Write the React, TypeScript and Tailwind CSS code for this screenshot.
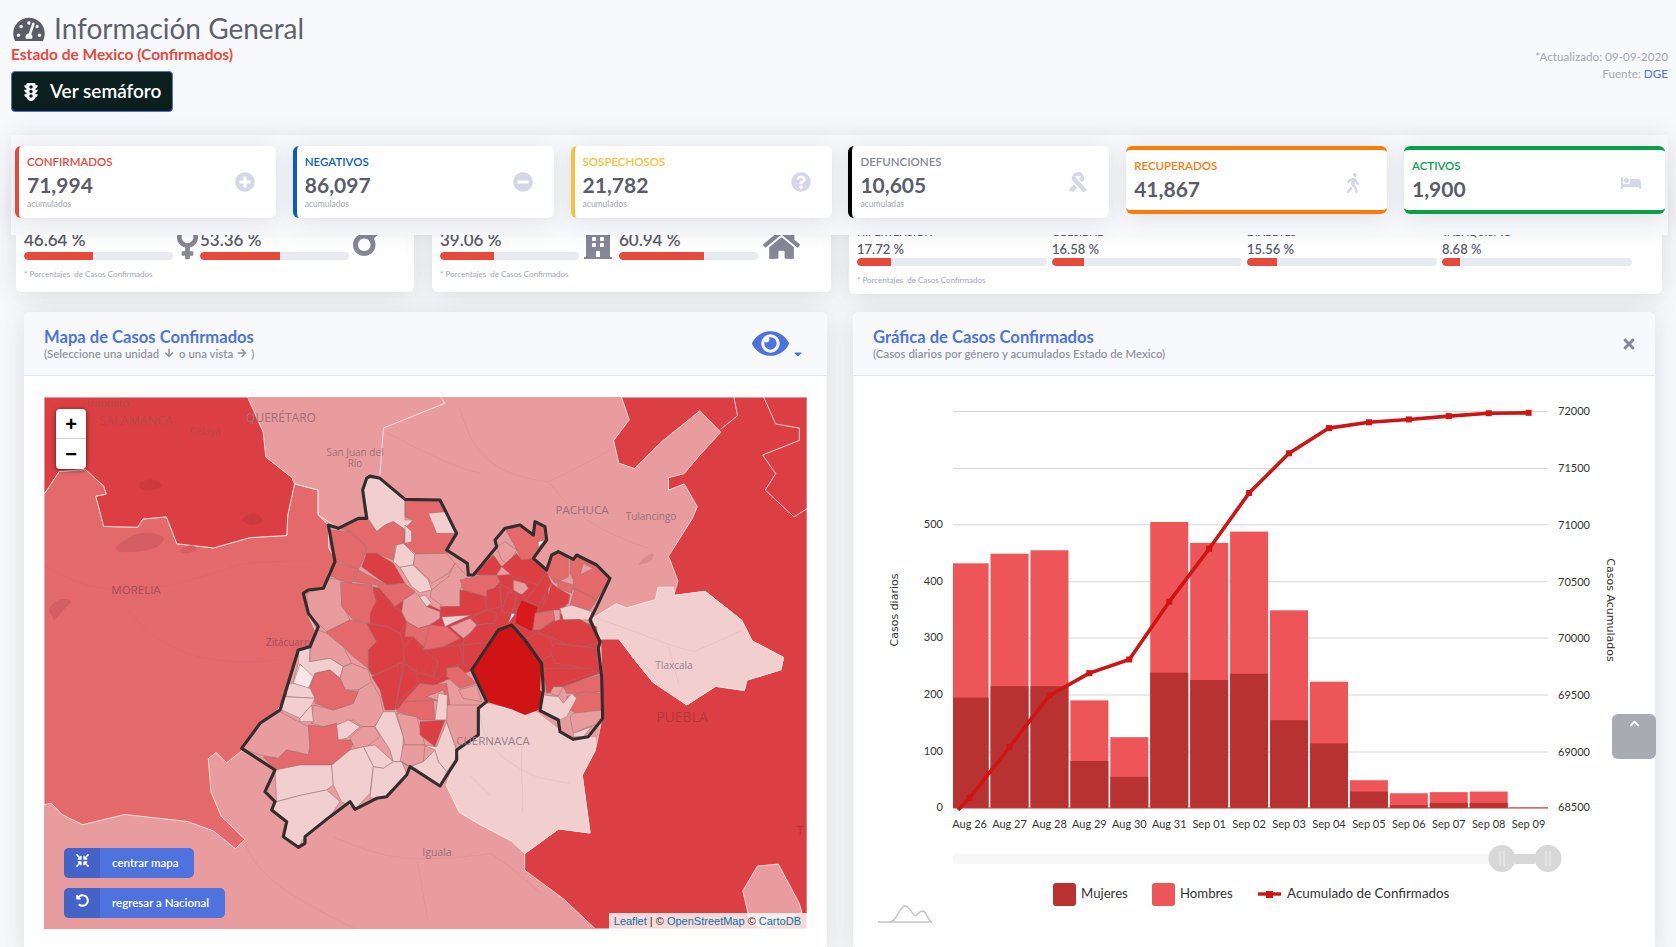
import React from "react";
import {
  FaTachometerAlt, FaTrafficLight, FaPlusCircle, FaMinusCircle, FaQuestionCircle, FaRibbon, FaWalking, FaBed,
  FaVenus, FaMars, FaBuilding, FaHome, FaEye, FaTimes, FaCompressArrowsAlt, FaUndoAlt, FaChevronUp, FaArrowDown, FaArrowRight, FaCaretDown,
} from "react-icons/fa";

const C: Record<string, string> = { a: "#f2cfcf", p: "#f9e6e6", b: "#e99c9d", c: "#e4696b", d: "#dc3f43", e: "#d81a1c", w: "#ffffff" };

const MUNI: [string, string][] = [
  ["d", "420,490 430,380 525,400 630,450 690,400 760,350 880,340 950,340 960,450 1100,500 1110,640 950,700 930,600 850,495 730,630 650,660 560,700 500,750 430,650"],
  ["a", "410,55 450,55 525,118 525,180 550,180 525,210 490,185 465,195 440,215 415,175 398,90"],
  ["c", "525,118 630,120 680,220 650,280 560,282 520,250 525,205 550,180 525,170"],
  ["a", "595,160 645,155 675,220 620,220"],
  ["a", "525,195 545,215 545,245 525,250"],
  ["c", "300,195 325,205 385,175 410,175 440,215 465,195 490,185 520,205 520,250 495,255 490,300 440,280 405,285 410,260 360,215"],
  ["c", "300,210 360,215 410,260 400,300 385,328 330,305 315,305"],
  ["d", "410,280 440,280 490,310 525,370 470,375 395,320"],
  ["a", "500,255 520,250 555,285 550,315 510,322 490,305"],
  ["a", "510,322 550,315 595,360 605,390 570,398 545,380"],
  ["b", "555,282 650,280 675,310 655,340 605,370 595,355 550,315"],
  ["b", "675,310 712,350 690,390 690,440 640,440 600,410 605,390 655,350"],
  ["c", "320,305 385,328 365,370 330,360 295,345"],
  ["c", "385,330 470,375 525,370 555,395 495,440 440,375 370,365"],
  ["b", "300,355 330,360 335,430 360,480 290,515 265,490 235,460 230,400 280,385"],
  ["c", "335,365 365,370 425,375 440,430 420,490 370,480 335,440"],
  ["d", "430,380 490,440 515,455 530,490 510,520 470,500 420,490 420,460 440,420"],
  ["b", "555,398 570,410 590,440 630,455 630,475 600,495 565,505 530,485 515,455 520,420"],
  ["a", "568,410 585,405 605,430 590,440"],
  ["c", "290,515 360,480 410,490 440,545 415,570 415,625 370,590 340,560 290,530"],
  ["d", "410,490 470,500 510,520 525,565 520,605 460,635 425,645 415,625 415,570 440,545"],
  ["b", "265,510 290,520 340,560 365,610 340,620 300,595 240,605 240,570"],
  ["a", "205,570 240,560 238,605 300,595 340,620 330,655 300,630 255,640 240,680 190,665 205,610"],
  ["p", "210,612 250,650 235,685 190,670"],
  ["b", "340,620 365,610 415,630 425,670 385,690 345,690 330,655"],
  ["b", "250,735 310,750 370,730 385,690 425,665 450,710 460,755 435,800 395,800 370,780 320,795 280,800 245,790"],
  ["c", "255,640 300,630 330,655 345,690 385,695 370,730 310,750 255,730 240,680"],
  ["a", "170,670 190,670 240,685 255,715 170,710"],
  ["a", "165,710 255,715 245,735 210,775 155,750"],
  ["a", "245,735 250,785 210,785 210,775"],
  ["b", "90,790 150,755 205,785 235,800 240,860 235,885 170,870 145,895 90,885 35,865"],
  ["c", "235,795 280,800 320,790 330,840 375,840 360,870 305,915 210,915 180,930 135,930 100,890 145,895 170,870 235,885 240,860"],
  ["a", "320,795 355,780 390,800 350,835 325,840"],
  ["b", "395,800 435,800 450,830 410,860 375,865 360,835"],
  ["a", "460,755 495,755 520,830 515,905 490,905 480,870 435,800"],
  ["b", "500,760 560,770 585,855 525,855 520,830"],
  ["d", "570,785 645,780 615,860 570,825"],
  ["a", "580,855 620,860 650,785 680,870 675,900 650,935 625,905 615,870"],
  ["b", "520,855 585,855 580,905 540,920 510,905"],
  ["a", "400,860 435,855 490,905 460,925 430,920"],
  ["a", "135,930 210,915 305,915 310,975 290,990 215,1005 140,1025"],
  ["a", "140,1025 215,1005 290,990 330,1025 300,1070 225,1130 205,1162 160,1130 170,1085 125,1050"],
  ["a", "305,915 360,870 400,860 430,920 420,1000 375,1048 335,1025 310,975"],
  ["a", "430,920 460,925 490,905 515,905 530,940 470,1010 420,1015"],
  ["a", "515,905 540,920 580,905 615,870 625,905 650,935 630,978 540,920"],
  ["b", "650,735 750,735 745,825 680,870 650,785"],
  ["c", "500,755 520,725 610,720 615,780 570,780 560,770"],
  ["d", "495,745 525,610 560,640 565,670 530,700"],
  ["d", "425,650 460,635 520,605 495,750 465,750 450,690"],
  ["d", "520,565 550,530 580,570 625,605 610,650 570,640 525,610"],
  ["d", "580,570 690,555 700,610 650,625 625,660 610,650 625,605"],
  ["d", "700,555 790,545 725,625 700,610"],
  ["c", "650,625 685,620 740,670 690,685 650,650"],
  ["c", "570,670 610,675 650,670 660,735 610,720 520,725"],
  ["b", "685,690 740,675 755,725 700,715"],
  ["b", "590,710 640,690 650,730 620,720"],
  ["a", "615,780 625,700 652,705 650,780"],
  ["c", "530,485 565,505 600,495 620,510 580,560 550,530 525,530"],
  ["c", "600,495 650,500 690,535 640,560 580,570"],
  ["b", "660,500 720,475 745,500 700,535"],
  ["a", "635,470 730,462 665,490 645,500"],
  ["d", "630,440 690,440 690,390 760,395 770,450 730,465 635,470"],
  ["c", "690,360 760,345 800,345 810,365 770,410 700,390"],
  ["d", "730,345 790,285 815,320 800,345 760,345"],
  ["b", "800,260 825,245 860,270 835,315 815,300"],
  ["c", "825,205 870,195 910,225 915,185 945,200 950,240 910,295 875,300 855,260"],
  ["d", "860,280 875,300 910,295 950,335 925,375 850,350 815,320"],
  ["d", "950,335 965,370 925,440 885,420 925,375"],
  ["d", "770,390 810,380 815,440 770,450"],
  ["d", "810,370 845,390 835,420 815,440"],
  ["b", "850,360 885,370 895,385 875,405 850,390"],
  ["d", "835,395 860,405 845,460 815,455"],
  ["d", "860,400 885,405 875,425 855,460"],
  ["e", "875,420 925,440 905,515 855,490 860,450"],
  ["w", "845,460 855,462 835,490"],
  ["w", "925,245 945,240 925,262"],
  ["d", "730,470 770,450 800,460 795,490 740,495"],
  ["d", "695,555 700,545 740,495 790,490 805,510 785,545"],
  ["c", "950,335 965,285 985,275 1015,298 1015,350 975,370"],
  ["c", "1020,300 1040,290 1100,315 1140,355 1100,420 1030,390 1030,360 1020,340"],
  ["b", "1060,310 1090,325 1050,345"],
  ["c", "980,360 1030,375 1025,400 985,385"],
  ["d", "965,370 985,385 1020,405 1015,430 980,460 925,455 955,405"],
  ["c", "1035,385 1100,420 1080,450 1020,435"],
  ["a", "990,445 1025,435 1085,455 1080,480 1000,480"],
  ["c", "915,460 970,450 975,478 930,510 910,510"],
  ["b", "970,450 990,450 990,480 975,485"],
  ["d", "920,515 985,480 1050,478 1090,505 1110,545 1050,565 1000,550 960,530"],
  ["d", "885,540 920,520 960,535 975,580 935,600"],
  ["d", "975,550 1100,565 1108,640 1040,620 975,610 960,570"],
  ["d", "945,625 1090,625 1085,640 1000,670 960,700 935,650"],
  ["c", "1000,680 1110,645 1115,695 1050,700 1010,700"],
  ["b", "970,680 1000,680 985,708 960,700"],
  ["c", "1010,710 1060,695 1115,700 1115,750 1040,760 1020,750"],
  ["a", "940,705 985,710 1000,730 1025,700 1040,715 1010,770 990,780 930,750"],
  ["b", "1030,760 1115,750 1115,790 1075,800 1030,820 1020,770"],
  ["a", "1030,820 1085,800 1060,830 1030,830"],
];

const OUTLINE =
  "410,55 420,48 450,55 525,118 630,120 680,220 650,270 712,310 715,345 730,345 800,260 795,240 825,205 870,195 910,225 915,185 945,200 950,240 910,295 950,330 965,285 985,275 1030,298 1040,285 1100,315 1140,355 1100,440 1080,480 1110,545 1105,565 1115,650 1118,775 1075,830 1030,838 990,815 985,780 930,752 940,690 935,610 885,540 845,495 805,510 725,630 770,725 745,745 745,825 680,870 680,900 630,978 540,920 530,945 470,1010 440,1015 375,1048 360,1025 300,1070 225,1130 225,1150 205,1162 160,1130 170,1085 125,1050 135,1025 105,995 135,930 35,865 90,790 150,750 205,570 240,560 265,500 235,460 220,400 235,390 280,385 315,305 295,195 325,205 385,175 410,175 398,90";

const CDMX = "845,495 885,540 935,610 930,690 940,700 925,750 885,765 845,748 770,725 725,630 805,510";

function MapDrawing() {
  const labels: [string, number, number, number, string][] = [
    ["Irapuato", 108, 404, 10.5, "#b04a50"],
    ["SALAMANCA", 136, 422, 12.5, "#b5484c"],
    ["Celaya", 205, 432, 10, "#b5484c"],
    ["QUERÉTARO", 281, 419, 12, "#a0707a"],
    ["San Juan del", 355, 453, 10, "#a0707a"],
    ["Río", 355, 464, 10, "#a0707a"],
    ["PACHUCA", 582, 511, 11.5, "#95707f"],
    ["Tulancingo", 651, 517, 10, "#95707f"],
    ["MORELIA", 136, 591, 11.5, "#a0505a"],
    ["Zitácuaro", 288, 643, 10, "#a0505a"],
    ["Tlaxcala", 674, 666, 10, "#958090"],
    ["PUEBLA", 682, 718, 14, "#b5363b"],
    ["CUERNAVACA", 493, 742, 11.5, "#95808f"],
    ["Iguala", 437, 853, 10.5, "#95707f"],
    ["TOLUCA", 417, 671, 11, "#d2474b"],
    ["T", 800, 832, 12, "#b5363b"],
  ];
  return (
    <svg viewBox="44 397 763 532" className="block w-full h-[532px]">
      <rect x="44" y="397" width="763" height="532" fill={C.b} />
      <g transform="translate(20 300) scale(0.523 0.4132)" stroke="#f9e4e4" strokeWidth="0.9" strokeLinejoin="round">
        <polygon vectorEffect="non-scaling-stroke" fill={C.c} points="46,470 75,415 125,410 160,450 165,470 145,475 160,548 225,550 235,530 280,525 300,590 370,600 440,575 510,570 512,520 525,445 570,460 570,520 590,545 590,600 605,630 590,660 585,695 545,710 550,760 565,800 555,850 530,880 510,950 490,1000 430,1085 395,1120 375,1095 360,1110 365,1190 385,1250 430,1305 412,1328 370,1285 320,1262 200,1245 120,1270 80,1245 60,1218 46,1222" />
        <polygon vectorEffect="non-scaling-stroke" fill={C.d} points="46,235 435,235 465,320 470,380 520,430 525,445 512,520 510,570 440,575 370,600 300,590 280,525 235,530 225,550 160,548 145,475 165,470 160,450 125,410 75,415 46,470" />
        <polygon vectorEffect="non-scaling-stroke" fill={C.d} points="1150,235 1165,290 1135,340 1145,395 1175,408 1225,345 1300,268 1340,320 1300,375 1270,420 1240,430 1240,460 1270,445 1295,500 1285,530 1240,620 1258,680 1250,715 1310,705 1380,775 1400,825 1460,865 1455,895 1390,920 1385,945 1330,935 1275,980 1210,925 1175,870 1145,820 1110,820 1115,1000 1105,1060 1100,1090 1075,1150 1090,1290 1030,1280 965,1340 965,1380 1040,1450 1100,1522 1505,1522 1505,235" />
        <polygon vectorEffect="non-scaling-stroke" fill={C.a} points="1095,770 1140,735 1160,745 1215,725 1220,695 1250,695 1250,715 1310,705 1380,775 1400,825 1460,865 1455,895 1390,920 1385,945 1330,935 1275,980 1210,925 1175,870 1145,820 1110,820" />
        <polygon vectorEffect="non-scaling-stroke" fill={C.a} points="815,1175 840,1090 880,975 940,990 990,1000 1030,1040 1040,1055 1100,1060 1100,1090 1075,1150 1090,1290 1030,1280 965,1340 940,1310 880,1270 840,1240" />
        <polygon vectorEffect="non-scaling-stroke" fill={C.b} points="1382,1430 1410,1370 1450,1365 1490,1460 1495,1482 1420,1522 1395,1500" />
        <polyline vectorEffect="non-scaling-stroke" fill="none" points="1422,235 1445,300 1490,310 1490,340 1420,375 1445,420 1425,460 1480,525 1505,505" />
        <polyline vectorEffect="non-scaling-stroke" fill="none" points="1365,235 1372,280 1340,312" />
        <polyline vectorEffect="non-scaling-stroke" fill="none" points="805,235 812,250 695,310 688,425" />
        <polyline vectorEffect="non-scaling-stroke" fill="none" points="525,445 570,460 570,520 600,545" />
        <g stroke="none">
          <path d="M228,445 C240,430 262,430 272,450 C262,462 240,465 228,455Z" fill="#cd3a3e" />
          <path d="M425,530 C440,510 460,515 465,535 C450,548 432,550 425,530Z" fill="#cd3a3e" />
          <path d="M182,600 C200,575 240,545 275,575 C272,600 250,612 190,610Z" fill="#d35f62" />
          <path d="M305,605 C320,590 338,590 338,605 C325,615 310,617 305,605Z" fill="#d35f62" />
          <path d="M55,750 C65,725 85,715 98,730 C85,745 75,765 65,775Z" fill="#d35f62" />
          <path d="M1182,640 C1190,625 1205,610 1212,615 C1212,630 1200,640 1182,640Z" fill="#d98d8f" />
        </g>
        <g fill="none" stroke="#9a5a66" strokeOpacity="0.13">
          <path vectorEffect="non-scaling-stroke" d="M1100,770 C1180,800 1240,840 1290,850 C1330,830 1360,810 1380,800 M1190,880 C1210,910 1230,940 1250,960 M1240,840 L1260,930" />
          <path vectorEffect="non-scaling-stroke" d="M880,1000 C885,1060 900,1100 980,1150 C1000,1160 1030,1165 1050,1170 M960,1080 C955,1150 965,1200 960,1240 M860,1150 L900,1200" />
          <path vectorEffect="non-scaling-stroke" d="M840,260 C860,340 880,420 1010,440 C1040,480 1060,540 1200,600 M1010,440 C1080,400 1130,360 1180,330 M700,320 C760,360 820,400 880,420" />
          <path vectorEffect="non-scaling-stroke" d="M600,1300 C680,1340 720,1370 900,1340 C950,1380 970,1410 1000,1440 M760,1360 L780,1500 M430,1310 C450,1380 480,1420 640,1522" />
          <path vectorEffect="non-scaling-stroke" d="M46,640 C120,700 200,740 420,640 C460,630 510,635 560,630 M200,740 C240,800 300,900 500,870" />
        </g>
      </g>
      <g transform="translate(230 460) scale(0.33333)" strokeLinejoin="round">
        <polygon vectorEffect="non-scaling-stroke" points={OUTLINE} fill={C.b} stroke="none" />
        {MUNI.map(([k, p], i) => (
          <polygon key={i} vectorEffect="non-scaling-stroke" points={p} fill={C[k]} stroke="#9a6f70" strokeWidth="0.55" />
        ))}
        <polygon vectorEffect="non-scaling-stroke" points={CDMX} fill="#d01315" />
        <polygon vectorEffect="non-scaling-stroke" points={OUTLINE} fill="none" stroke="#332e2e" strokeWidth="3.1" />
      </g>
      {labels.map(([t, x, y, s, c]) => (
        <text key={t} x={x} y={y} fontSize={s} fill={c} textAnchor="middle" dominantBaseline="middle" fontFamily="'Open Sans',sans-serif" fontWeight="500">
          {t}
        </text>
      ))}
    </svg>
  );
}

const TOTAL = [432, 449, 455, 190, 125, 505, 468, 488, 349, 223, 49, 26, 28, 29, 1];
const MUJ = [195, 215, 215, 83, 55, 239, 226, 237, 155, 114, 29, 5, 9, 9, 0];
const DAYS = ["Aug 26", "Aug 27", "Aug 28", "Aug 29", "Aug 30", "Aug 31", "Sep 01", "Sep 02", "Sep 03", "Sep 04", "Sep 05", "Sep 06", "Sep 07", "Sep 08", "Sep 09"];
const LINE = [1205, 1082, 957, 903, 870, 730, 602, 467, 371, 310, 296, 289, 281, 274, 273];

function Chart() {
  const cx = (i: number) => 969.6 + 39.93 * i;
  const vy = (v: number) => 808 - v * 0.5664;
  const ly = (z: number) => 300 + z / 2.42;
  const grid = [411.5, 468.6, 524.8, 581.8, 638, 695, 752];
  const right = ["72000", "71500", "71000", "70500", "70000", "69500", "69000"];
  const left: [string, number][] = [["500", 524.8], ["400", 581.8], ["300", 638], ["200", 695], ["100", 752], ["0", 808]];
  const pts = LINE.map((z, i) => `${cx(i)},${ly(z)}`).join(" ");
  return (
    <svg viewBox="853 376 802 571" className="block w-full h-[571px]" fontFamily="'Lato',sans-serif">
      {grid.map((y) => (
        <line key={y} x1="953" x2="1548" y1={y} y2={y} stroke="#d6d6d6" />
      ))}
      {grid.map((y, i) => (
        <text key={y} x="1558" y={y + 1} fontSize="11" fill="#333" dominantBaseline="middle">{right[i]}</text>
      ))}
      <text x="1558" y="808.5" fontSize="11" fill="#333" dominantBaseline="middle">68500</text>
      {left.map(([t, y]) => (
        <text key={t} x="943" y={y + 0.5} fontSize="11" fill="#333" textAnchor="end" dominantBaseline="middle">{t}</text>
      ))}
      {TOTAL.map((v, i) => {
        const l = Math.max(953, cx(i) - 19);
        const r = cx(i) + 19;
        return (
          <g key={i}>
            <rect x={l} y={vy(v)} width={r - l} height={808 - vy(v)} fill="#ee5558" />
            <rect x={l} y={vy(MUJ[i])} width={r - l} height={808 - vy(MUJ[i])} fill="#b93232" />
          </g>
        );
      })}
      <line x1="953" x2="1548" y1="808" y2="808" stroke="#cc3333" />
      <polyline points={`958,810 ${pts}`} fill="none" stroke="#cf1414" strokeWidth="3.6" strokeLinejoin="round" />
      {LINE.map((z, i) => (
        <rect key={i} x={cx(i) - 3} y={ly(z) - 3} width="6" height="6" fill="#cf1414" />
      ))}
      {DAYS.map((d, i) => (
        <text key={d} x={cx(i)} y="825" fontSize="11" fill="#333" textAnchor="middle" dominantBaseline="middle">{d}</text>
      ))}
      <text transform="translate(895 610) rotate(-90)" fontSize="11" fill="#333" textAnchor="middle" dominantBaseline="middle" fontFamily="'DejaVu Sans',sans-serif">Casos diarios</text>
      <text transform="translate(1610 610) rotate(90)" fontSize="11" fill="#333" textAnchor="middle" dominantBaseline="middle" fontFamily="'DejaVu Sans',sans-serif">Casos Acumulados</text>

      <rect x="953" y="854" width="595" height="10" rx="3" fill="#f7f7f7" />
      <rect x="1515" y="854" width="20" height="10" fill="#d8d8d8" />
      <circle cx="1502" cy="858.5" r="13.5" fill="#d8d8d8" />
      <circle cx="1548" cy="858.5" r="13.5" fill="#d8d8d8" />
      <path d="M1500,851 V866 M1504,851 V866 M1546,851 V866 M1550,851 V866" stroke="#eeeeee" strokeWidth="1" />

      <rect x="1053" y="883" width="23" height="23" rx="3" fill="#b93232" />
      <text x="1081" y="894.5" fontSize="13.2" fill="#333" dominantBaseline="middle">Mujeres</text>
      <rect x="1152" y="883" width="23" height="23" rx="3" fill="#ee5558" />
      <text x="1180" y="894.5" fontSize="13.2" fill="#333" dominantBaseline="middle">Hombres</text>
      <line x1="1258" x2="1281" y1="894" y2="894" stroke="#cf1414" strokeWidth="3.4" />
      <rect x="1266" y="891" width="7" height="7" fill="#cf1414" />
      <text x="1287" y="894.5" fontSize="13.4" fill="#333" dominantBaseline="middle">Acumulado de Confirmados</text>

      <path d="M878,922 H890 C897,922 899,906 905,906 C911,906 913,920 918,914 C921,910 924,910 926,914 C928,918 930,922 932,922" fill="none" stroke="#c4c4c4" strokeWidth="1.5" />
      <path d="M890,922 H932" stroke="#c4c4c4" strokeWidth="1.5" />
    </svg>
  );
}

function Stat({ label, value, sub, color, text, Icon, both }: { label: string; value: string; sub?: string; color: string; text: string; Icon: React.ComponentType<{ className?: string }>; both?: boolean }) {
  return (
    <div
      className={`w-[261px] shrink-0 bg-white rounded-[6px] shadow-[0_3px_24px_rgba(58,59,69,0.13)] flex items-center justify-between pr-[21px] pl-[8px] ${color} ${both ? "border-y-4 h-[68px]" : "border-l-4 h-[72px]"}`}
    >
      <div className="flex flex-col">
        <span className={`text-[11.5px] leading-[14px] font-semibold ${text}`}>{label}</span>
        <span className="text-[21px] leading-[27px] font-bold text-[#5a5c69] mt-[2px]">{value}</span>
        {sub && <span className="text-[8.5px] leading-[10px] text-[#a3a5b1] mt-[1px]">{sub}</span>}
      </div>
      <Icon className={`text-[20px] text-[#d5d7e6] ${both ? "mt-[5px] mr-[3px]" : ""}`} />
    </div>
  );
}

function Bar({ pct, w }: { pct: number; w: string }) {
  return (
    <div className={`h-2 rounded-full bg-[#e8eaf1] overflow-hidden ${w}`}>
      <div className="h-full bg-[#e74a3b] rounded-l-full" style={{ width: `${pct}%` }} />
    </div>
  );
}

function Pct({ v, w }: { v: number; w: string }) {
  return (
    <div className={`flex flex-col shrink-0 ${w}`}>
      <span className="text-[17px] leading-[20px] font-semibold text-[#5a5c69]">{v.toFixed(2)} %</span>
      <Bar pct={v} w="w-full mt-[2px]" />
    </div>
  );
}

function Note() {
  return <p className="text-[8px] leading-[10px] text-[#a3a5b8] mt-[9px]">* Porcentajes&nbsp; de Casos Confirmados</p>;
}

function Cond({ name, pct, fill }: { name: string; pct: string; fill: number }) {
  return (
    <div className="w-[190px] shrink-0 flex flex-col">
      <span className="text-[10.5px] leading-[12px] text-[#5a5c69] uppercase font-semibold">{name}</span>
      <span className="text-[13px] leading-[16px] font-semibold text-[#5a5c69] mt-[3px]">{pct}</span>
      <Bar pct={fill} w="w-full mt-[1px]" />
    </div>
  );
}

export default function App() {
  const cardShadow = "shadow-[0_3px_28px_rgba(58,59,69,0.15)]";
  return (
    <div className="relative w-[1676px] h-[947px] overflow-hidden bg-[#f8f9fc] font-['Lato',sans-serif]">
      <header className="h-[135px] pl-[11px] pr-[8px] flex justify-between">
        <div className="flex flex-col items-start">
          <div className="flex items-center h-[42px] mt-[7px]">
            <div className="h-[25px] w-[32px] ml-[2px] overflow-hidden shrink-0">
              <FaTachometerAlt className="w-[32px] h-[28px] text-[#5a5c69]" />
            </div>
            <h1 className="text-[28px] leading-[36px] font-normal text-[#5f616e] ml-[9px]">Información General</h1>
          </div>
          <div className="text-[15.5px] leading-[20px] font-bold text-[#e74a3b] -mt-[5px]">Estado de Mexico (Confirmados)</div>
          <button className="mt-[7px] w-[162px] h-[41px] bg-[#0a1f1e] border border-[#4e73df] rounded-[4px] flex items-center pl-[10px] text-white text-[19px] font-semibold">
            <FaTrafficLight className="text-[18px] mr-[10px]" />
            Ver semáforo
          </button>
        </div>
        <div className="text-right text-[11.7px] leading-[17px] text-[#a5a7b3] pt-[48px]">
          <div>*Actualizado: 09-09-2020</div>
          <div>
            Fuente: <span className="text-[#4e73df]">DGE</span>
          </div>
        </div>
      </header>

      <section className="relative z-10 ml-[11px] w-[1657px] h-[100px] pt-[11px] pl-[4px] bg-[#f8f9fc] shadow-[0_-4px_22px_rgba(58,59,69,0.08)] flex gap-[16.8px] items-start">
        <Stat label="CONFIRMADOS" value="71,994" sub="acumulados" color="border-[#e74a3b]" text="text-[#e74a3b]" Icon={FaPlusCircle} />
        <Stat label="NEGATIVOS" value="86,097" sub="acumulados" color="border-[#0a5cc0]" text="text-[#0a5cc0]" Icon={FaMinusCircle} />
        <Stat label="SOSPECHOSOS" value="21,782" sub="acumulados" color="border-[#f6c23e]" text="text-[#f6c23e]" Icon={FaQuestionCircle} />
        <Stat label="DEFUNCIONES" value="10,605" sub="acumuladas" color="border-[#000000]" text="text-[#858796]" Icon={FaRibbon} />
        <Stat both label="RECUPERADOS" value="41,867" color="border-[#f97d0b]" text="text-[#f97d0b]" Icon={FaWalking} />
        <Stat both label="ACTIVOS" value="1,900" color="border-[#0a9f4b]" text="text-[#0a9f4b]" Icon={FaBed} />
      </section>

      <section className="-mt-[40px] pl-[16px] flex gap-[18px] items-start">
        <div className={`w-[398px] h-[97px] bg-white rounded-[6px] pt-[35px] pl-[8px] ${cardShadow}`}>
          <div className="flex items-start h-[30px]">
            <Pct v={46.64} w="w-[149px]" />
            <FaVenus className="w-[21px] h-[38px] ml-[4px] mr-[2px] -mt-[6px] shrink-0 text-[#858796]" />
            <Pct v={53.36} w="w-[149px]" />
            <FaMars className="w-[30px] h-[40px] ml-[4px] -mt-[9px] shrink-0 text-[#858796]" />
          </div>
          <Note />
        </div>
        <div className={`w-[399px] h-[97px] bg-white rounded-[6px] pt-[35px] pl-[8px] ${cardShadow}`}>
          <div className="flex items-start h-[30px]">
            <Pct v={39.06} w="w-[139px]" />
            <FaBuilding className="w-[28px] h-[32px] ml-[5px] mr-[7px] -mt-[3px] shrink-0 text-[#858796]" />
            <Pct v={60.94} w="w-[139px]" />
            <FaHome className="w-[37px] h-[33px] ml-[5px] -mt-[2px] shrink-0 text-[#858796]" />
          </div>
          <Note />
        </div>
        <div className={`w-[813px] h-[99px] bg-white rounded-[6px] pt-[31px] pl-[8px] ${cardShadow}`}>
          <div className="flex gap-[5px]">
            <Cond name="Hipertensión" pct="17.72 %" fill={18} />
            <Cond name="Obesidad" pct="16.58 %" fill={17} />
            <Cond name="Diabetes" pct="15.56 %" fill={16} />
            <Cond name="Tabaquismo" pct="8.68 %" fill={9.5} />
          </div>
          <Note />
        </div>
      </section>

      <section className="mt-[18px] pl-[24px] flex gap-[26px] items-start">
        <div className={`w-[803px] h-[640px] bg-white rounded-[6px] ${cardShadow}`}>
          <div className="h-[64px] bg-[#f8f9fc] border-b border-[#e3e6f0] rounded-t-[6px] pl-[20px] pr-[23px] flex items-center justify-between">
            <div className="flex flex-col -mt-[1px]">
              <span className="text-[16.6px] leading-[20px] font-bold text-[#4e73df]">Mapa de Casos Confirmados</span>
              <span className="text-[11.4px] leading-[13px] font-semibold text-[#9294a0] flex items-center">
                (Seleccione una unidad <FaArrowDown className="text-[10px] mx-[5px]" /> o una vista <FaArrowRight className="text-[10px] mx-[4px]" />)
              </span>
            </div>
            <div className="flex items-end">
              <FaEye className="text-[37px] text-[#4e73df]" />
              <FaCaretDown className="text-[12px] text-[#4e73df] ml-[3px] mb-[2px]" />
            </div>
          </div>
          <div className="relative pt-[21px] px-[20px]">
            <MapDrawing />
            <div className="absolute left-[32px] top-[33px] w-[30px] rounded-[4px] bg-white shadow-[0_1px_5px_rgba(0,0,0,0.65)] flex flex-col items-center text-black font-bold">
              <div className="h-[30px] w-full flex items-center justify-center text-[20px] border-b border-[#cccccc] font-['Liberation_Sans',sans-serif]">+</div>
              <div className="h-[30px] w-full flex items-center justify-center text-[20px] font-['Liberation_Sans',sans-serif]">−</div>
            </div>
            <div className="absolute left-[40px] top-[472px] flex flex-col items-start gap-[10px]">
              <div className="h-[30px] w-[130px] rounded-[5px] bg-[#4e73df] flex text-white text-[11.5px] font-semibold overflow-hidden">
                <span className="w-[36px] bg-[#4363c6] flex items-start pt-[6px] justify-center"><FaCompressArrowsAlt className="text-[13px]" /></span>
                <span className="flex-1 flex items-center pl-[12px]">centrar mapa</span>
              </div>
              <div className="h-[30px] w-[161px] rounded-[5px] bg-[#4e73df] flex text-white text-[11.5px] font-semibold overflow-hidden">
                <span className="w-[36px] bg-[#4363c6] flex items-start pt-[6px] justify-center"><FaUndoAlt className="text-[13px]" /></span>
                <span className="flex-1 flex items-center pl-[12px]">regresar a Nacional</span>
              </div>
            </div>
            <div className="absolute right-[20px] top-[537px] h-[16px] w-[198px] bg-white/80 text-[11px] leading-[16px] text-[#333333] text-right pr-[6px] font-['Liberation_Sans',sans-serif] whitespace-nowrap">
              <span className="text-[#0078a8]">Leaflet</span> | © <span className="text-[#0078a8]">OpenStreetMap</span> © <span className="text-[#0078a8]">CartoDB</span>
            </div>
          </div>
        </div>

        <div className={`w-[802px] h-[640px] bg-white rounded-[6px] ${cardShadow}`}>
          <div className="h-[64px] bg-[#f8f9fc] border-b border-[#e3e6f0] rounded-t-[6px] pl-[20px] pr-[18px] flex items-center justify-between">
            <div className="flex flex-col -mt-[1px]">
              <span className="text-[16.6px] leading-[20px] font-bold text-[#4e73df]">Gráfica de Casos Confirmados</span>
              <span className="text-[11.4px] leading-[13px] font-semibold text-[#9294a0]">(Casos diarios por género y acumulados Estado de Mexico)</span>
            </div>
            <FaTimes className="text-[16px] text-[#858796]" />
          </div>
          <Chart />
        </div>
      </section>

      <div className="absolute left-[1612px] top-[714px] w-[44px] h-[45px] rounded-[6px] bg-[#a9abb3] flex justify-center pt-[4px] text-white">
        <FaChevronUp className="text-[11px]" />
      </div>
    </div>
  );
}
